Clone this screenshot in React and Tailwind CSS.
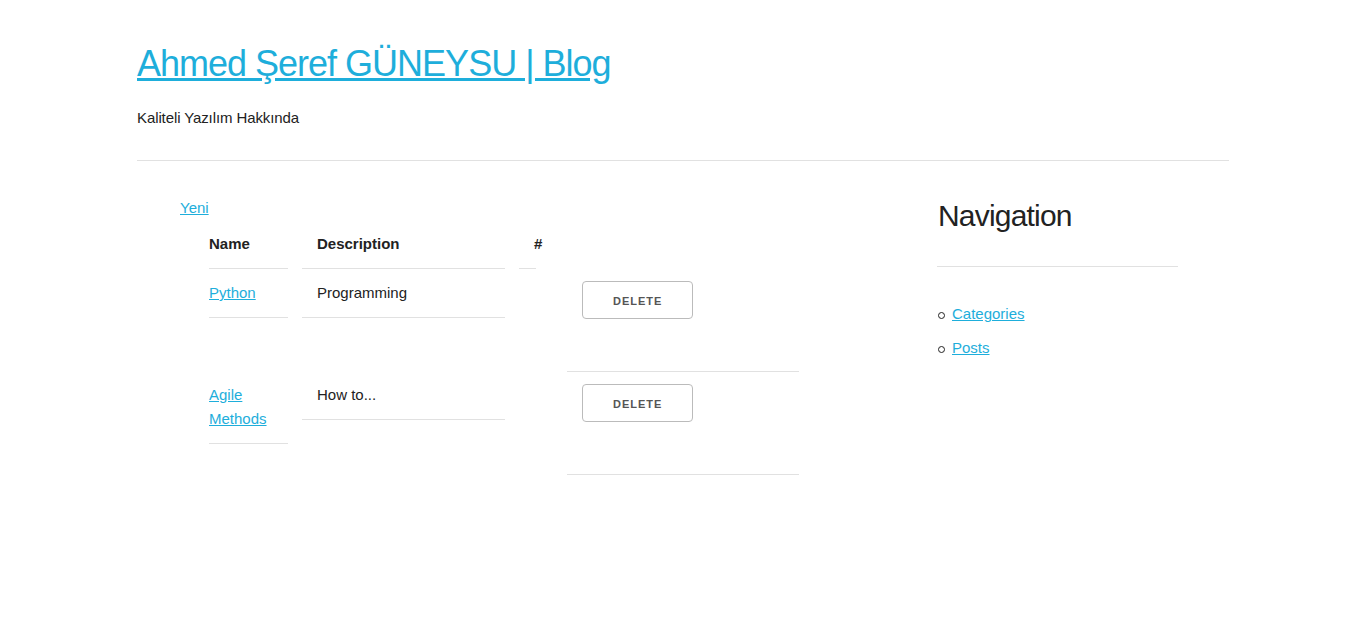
const rows = [
  { name: 'Python', description: 'Programming' },
  { name: 'Agile Methods', description: 'How to...' },
]

function DeleteButton() {
  return (
    <button className="h-[38px] px-[30px] border border-[#bbbbbb] rounded-[4px] bg-transparent text-[11px] font-semibold tracking-[1px] uppercase text-[#555555] leading-[38px]">
      Delete
    </button>
  )
}

export default function App() {
  return (
    <div className="min-h-screen bg-white font-['Liberation_Sans',Arial,sans-serif] text-[15px] leading-[24px] text-[#222222]">
      <div className="w-[1092px] mx-auto">
        {/* Header */}
        <div className="pt-[41px]">
          <h1 className="text-[36px] leading-[45px] tracking-[-1px] font-normal">
            <a href="#" className="text-[#1EAEDB] underline">Ahmed Şeref GÜNEYSU | Blog</a>
          </h1>
          <p className="mt-[20px] tracking-[-0.1px]">Kaliteli Yazılım Hakkında</p>
        </div>
        <hr className="mt-[30px] border-0 border-t border-[#E1E1E1]" />

        <div className="flex pt-[35px]">
          {/* Main */}
          <div className="ml-[43px] w-[714px]">
            <a href="#" className="text-[#1EAEDB] underline">Yeni</a>
            <div className="flex ml-[29px]">
              <div className="w-[79px] flex flex-col">
                <div className="py-[12px] border-b border-[#E1E1E1] font-bold">Name</div>
                {rows.map((r, i) => (
                  <div key={r.name} className={`pt-[12px] pb-[12px] pr-[15px] border-b border-[#E1E1E1] ${i === 1 ? 'mt-[53px]' : ''}`}>
                    <a href="#" className="text-[#1EAEDB] underline">{r.name}</a>
                  </div>
                ))}
              </div>
              <div className="w-[203px] ml-[14px] flex flex-col">
                <div className="py-[12px] pl-[15px] border-b border-[#E1E1E1] font-bold">Description</div>
                {rows.map((r, i) => (
                  <div key={r.name} className={`py-[12px] pl-[15px] border-b border-[#E1E1E1] ${i === 1 ? 'mt-[53px]' : ''}`}>
                    {r.description}
                  </div>
                ))}
              </div>
              <div className="w-[17px] ml-[14px]">
                <div className="py-[12px] pl-[15px] border-b border-[#E1E1E1] font-bold whitespace-nowrap">#</div>
              </div>
              <div className="w-[232px] ml-[31px] pt-[49px] flex flex-col">
                {rows.map((r) => (
                  <div key={r.name} className="h-[103px] pt-[12px] pl-[15px] border-b border-[#E1E1E1]">
                    <DeleteButton />
                  </div>
                ))}
              </div>
            </div>
          </div>

          {/* Sidebar */}
          <div className="ml-[43px] w-[241px]">
            <h3 className="text-[30px] leading-[39px] tracking-[-0.8px] font-normal pl-[1px]">Navigation</h3>
            <hr className="mt-[31px] border-0 border-t border-[#E1E1E1]" />
            <ul className="mt-[35px] pl-[1px]">
              {['Categories', 'Posts'].map((item) => (
                <li key={item} className="flex items-center mb-[10px]">
                  <span className="w-[7px] h-[7px] rounded-full border border-[#222222] mt-[2px]" />
                  <a href="#" className="ml-[7px] text-[#1EAEDB] underline">{item}</a>
                </li>
              ))}
            </ul>
          </div>
        </div>
      </div>
    </div>
  )
}
